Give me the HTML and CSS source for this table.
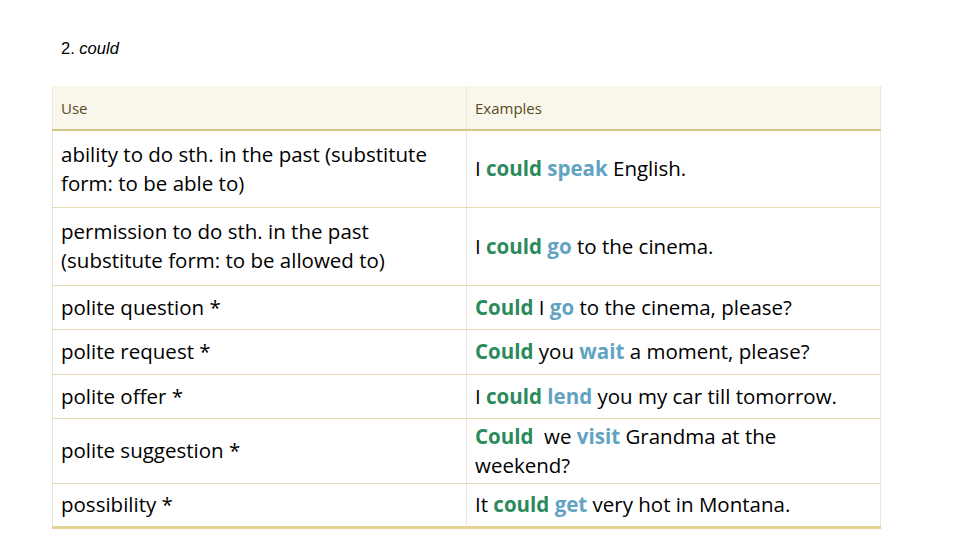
FILE: index.html
```html
<!DOCTYPE html>
<html>
<head>
<meta charset="utf-8">
<link rel="stylesheet" href="styles.css">
</head>
<body>
<div class="page">
  <p class="title">2. <em>could</em></p>
  <table class="grid">
    <thead>
      <tr class="h44"><th>Use</th><th>Examples</th></tr>
    </thead>
    <tbody>
      <tr class="h77"><td>ability to do sth. in the past (substitute<br>form: to be able to)</td><td>I <span class="m">could</span> <span class="v">speak</span> English.</td></tr>
      <tr class="h78"><td>permission to do sth. in the past<br>(substitute form: to be allowed to)</td><td>I <span class="m">could</span> <span class="v">go</span> to the cinema.</td></tr>
      <tr class="h44"><td>polite question *</td><td><span class="m">Could</span> I <span class="v">go</span> to the cinema, please?</td></tr>
      <tr class="h45"><td>polite request *</td><td><span class="m">Could</span> you <span class="v">wait</span> a moment, please?</td></tr>
      <tr class="h44"><td>polite offer *</td><td>I <span class="m">could</span> <span class="v">lend</span> you my car till tomorrow.</td></tr>
      <tr class="h65"><td>polite suggestion *</td><td><span class="m">Could</span> &nbsp;we <span class="v">visit</span> Grandma at the<br>weekend?</td></tr>
      <tr class="h44 last"><td>possibility *</td><td>It <span class="m">could</span> <span class="v">get</span> very hot in Montana.</td></tr>
    </tbody>
  </table>
</div>
</body>
</html>
```
FILE: styles.css
```css
html, body {
  margin: 0;
  padding: 0;
  background: #ffffff;
}
.page {
  width: 960px;
  height: 540px;
  overflow: hidden;
  padding: 0 0 0 52px;
  box-sizing: border-box;
}
.title {
  margin: 0;
  padding: 39px 0 0 9px;
  height: 86px;
  box-sizing: border-box;
  font-family: "Liberation Sans", Arial, sans-serif;
  font-size: 16.5px;
  line-height: 18px;
  color: #000;
}
.title em {
  font-style: italic;
}
.grid {
  border-collapse: collapse;
  width: 829px;
  table-layout: fixed;
  font-family: "Open Sans", Lato, sans-serif;
  color: #000;
}
.grid th, .grid td {
  width: 50%;
  padding: 0 8px;
  text-align: left;
  vertical-align: middle;
  border-left: 1px solid #ebe7da;
  border-right: 1px solid #ebe7da;
  border-bottom: 1px solid #e6dbae;
  white-space: nowrap;
}
.grid th {
  background: #f9f6ec;
  font-weight: normal;
  font-size: 15px;
  color: #5a4a1e;
  border-bottom: 2px solid #d8c886;
}
.grid td {
  font-size: 20.5px;
  line-height: 29px;
}
.grid tr.last td {
  border-bottom: 3px solid #e2d394;
}
.h44 { height: 44px; }
.h45 { height: 45px; }
.h65 { height: 65px; }
.h77 { height: 77px; }
.h78 { height: 78px; }
.m {
  color: #2b8a5c;
  font-weight: bold;
}
.v {
  color: #62a3c2;
  font-weight: bold;
}
```
